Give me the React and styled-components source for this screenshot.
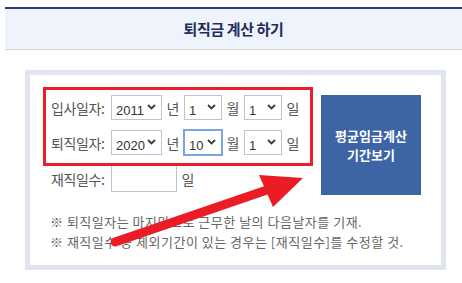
import React from "react";
import styled, { createGlobalStyle } from "styled-components";

const GlobalStyle = createGlobalStyle`
  html, body { margin: 0; padding: 0; background: #ffffff; }
  body { font-family: "Noto Sans CJK KR", "Noto Sans", sans-serif; }
`;

const Page = styled.div`
  padding: 7px 0 0 5px;
  width: 462px;
  box-sizing: border-box;
`;

const Header = styled.div`
  height: 40px;
  border-top: 2px solid #2b3c7a;
  border-bottom: 1px solid #d6d7dd;
  background: #eff3fb;
  display: flex;
  align-items: center;
  justify-content: center;
`;

const Title = styled.h1`
  margin: 0;
  font-size: 15px;
  font-weight: 700;
  letter-spacing: -0.4px;
  line-height: 20px;
  color: #1f2d5c;
`;

const Box = styled.div`
  position: relative;
  margin: 20px 0 0 20px;
  width: 421px;
  box-sizing: border-box;
  border: 5px solid #e1e5f1;
  padding: 20px 20px 13px 21px;
`;

const Top = styled.div`
  display: flex;
  align-items: flex-start;
  justify-content: space-between;
`;

const Rows = styled.div`
  display: flex;
  flex-direction: column;
  gap: 10px;
`;

const Row = styled.div`
  display: flex;
  align-items: center;
  height: ${(p) => p.$h || 25}px;
`;

const Label = styled.span`
  width: 60px;
  font-size: 14px;
  letter-spacing: -0.4px;
  line-height: 20px;
  color: #555;
`;

const Unit = styled.span`
  width: 22px;
  text-align: center;
  font-size: 14px;
  line-height: 20px;
  color: #555;
`;

const SelectWrap = styled.div`
  position: relative;
  width: ${(p) => p.$w}px;
  height: 25px;
  box-sizing: border-box;
  border: 1px solid ${(p) => (p.$focus ? "#7aa5e2" : "#bcc3d3")};
  box-shadow: ${(p) => (p.$focus ? "0 0 0 1px #7aa5e2" : "none")};
  background: #fff;
`;

const Select = styled.select`
  appearance: none;
  -webkit-appearance: none;
  border: none;
  outline: none;
  background: transparent;
  width: 100%;
  height: 100%;
  padding: 0 0 0 4px;
  margin: 0;
  font-family: "Liberation Sans", Arial, sans-serif;
  font-size: 13px;
  color: #333;
`;

const Chevron = styled.svg`
  position: absolute;
  right: 5px;
  top: 8px;
  width: 9px;
  height: 6px;
  pointer-events: none;
`;

const Input = styled.input`
  width: 66px;
  height: 27px;
  box-sizing: border-box;
  border: 1px solid #bcc3d3;
  margin: 0;
  padding: 0 4px;
  outline: none;
`;

const CalcButton = styled.button`
  width: 100px;
  height: 100px;
  border: none;
  margin: 0;
  padding: 0;
  background: #3d65a5;
  color: #ffffff;
  font-family: "Noto Sans CJK KR", sans-serif;
  font-size: 13px;
  font-weight: 700;
  letter-spacing: 0px;
  line-height: 19px;
  cursor: pointer;
  display: flex;
  flex-direction: column;
  align-items: center;
  justify-content: center;
`;

const ButtonLine = styled.span`
  display: block;
  height: 19px;
`;

const Notes = styled.div`
  margin: 17px 0 0 -1px;
  font-size: 13px;
  line-height: 20px;
  color: #666;
  letter-spacing: 0.5px;
`;

const Note = styled.p`
  margin: 0;
  white-space: nowrap;
`;

const Highlight = styled.div`
  position: absolute;
  left: 13px;
  top: 12px;
  width: 270px;
  height: 79px;
  box-sizing: border-box;
  border: 3px solid #ea1f29;
  pointer-events: none;
`;

const ArrowLayer = styled.svg`
  position: absolute;
  left: -5px;
  top: -5px;
  width: 421px;
  height: 200px;
  overflow: visible;
  pointer-events: none;
`;

function DropSelect({ w, value, options, focus }) {
  return (
    <SelectWrap $w={w} $focus={focus}>
      <Select defaultValue={value}>
        {options.map((o) => (
          <option key={o} value={o}>
            {o}
          </option>
        ))}
      </Select>
      <Chevron viewBox="0 0 9 6">
        <path d="M1 1 L4.5 4.5 L8 1" fill="none" stroke="#3a3a3a" strokeWidth="1.8" />
      </Chevron>
    </SelectWrap>
  );
}

const years = Array.from({ length: 30 }, (_, i) => String(2000 + i));
const months = Array.from({ length: 12 }, (_, i) => String(i + 1));
const days = Array.from({ length: 31 }, (_, i) => String(i + 1));

function DateRow({ label, y, m, d, focusMonth }) {
  return (
    <Row>
      <Label>{label}</Label>
      <DropSelect w={51} value={y} options={years} />
      <Unit>년</Unit>
      <DropSelect w={38} value={m} options={months} focus={focusMonth} />
      <Unit>월</Unit>
      <DropSelect w={38} value={d} options={days} />
      <Unit>일</Unit>
    </Row>
  );
}

export default function App() {
  return (
    <Page>
      <GlobalStyle />
      <Header>
        <Title>퇴직금 계산 하기</Title>
      </Header>
      <Box>
        <Top>
          <Rows>
            <DateRow label="입사일자:" y="2011" m="1" d="1" />
            <DateRow label="퇴직일자:" y="2020" m="10" d="1" focusMonth />
            <Row $h={27}>
              <Label>재직일수:</Label>
              <Input type="text" />
              <Unit>일</Unit>
            </Row>
          </Rows>
          <CalcButton>
            <ButtonLine>평균임금계산</ButtonLine>
            <ButtonLine>기간보기</ButtonLine>
          </CalcButton>
        </Top>
        <Notes>
          <Note>※ 퇴직일자는 마지막으로 근무한 날의 다음날자를 기재.</Note>
          <Note>※ 재직일수 중 제외기간이 있는 경우는 [재직일수]를 수정할 것.</Note>
        </Notes>
        <Highlight />
        <ArrowLayer viewBox="0 0 421 200">
          <line x1="90" y1="172" x2="242" y2="120" stroke="#ec1c24" strokeWidth="9" strokeLinecap="round" />
          <polygon points="234,105 278,108 248,137" fill="#ec1c24" />
        </ArrowLayer>
      </Box>
    </Page>
  );
}
